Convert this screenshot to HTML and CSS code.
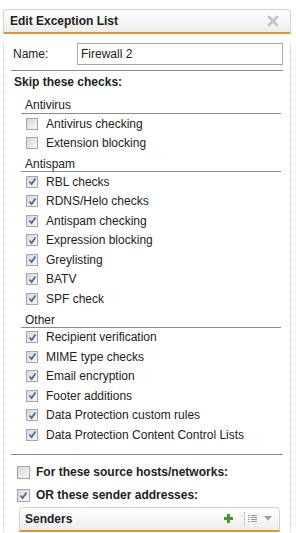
FILE: index.html
```html
<!DOCTYPE html>
<html lang="en">
<head>
  <meta charset="UTF-8" />
  <title>Edit Exception List</title>
  <link rel="stylesheet" href="styles.css">
</head>
<body>
  <div class="dialog">
    <div class="dialog-head">
      <span class="title">Edit Exception List</span>
      <svg class="close" width="12" height="12" viewBox="0 0 12 12">
        <path d="M2 2 L10 10 M10 2 L2 10" stroke="#c4c4c4" stroke-width="2.8" stroke-linecap="round" />
      </svg>
    </div>

    <div class="dialog-body">
      <div class="name-row">
        <label class="name-label">Name:</label>
        <input class="name-input" type="text" value="Firewall 2" />
      </div>

      <div class="skip-title">Skip these checks:</div>

      <div class="group">
        <div class="group-title first">Antivirus</div>
        <div class="check"><span class="box"></span>Antivirus checking</div>
        <div class="check"><span class="box"></span>Extension blocking</div>
      </div>

      <div class="group">
        <div class="group-title">Antispam</div>
        <div class="check"><span class="box on"><svg viewBox="0 0 9 9"><path d="M1.5 4.5 L3.6 7 L7.5 1.5" /></svg></span>RBL checks</div>
        <div class="check"><span class="box on"><svg viewBox="0 0 9 9"><path d="M1.5 4.5 L3.6 7 L7.5 1.5" /></svg></span>RDNS/Helo checks</div>
        <div class="check"><span class="box on"><svg viewBox="0 0 9 9"><path d="M1.5 4.5 L3.6 7 L7.5 1.5" /></svg></span>Antispam checking</div>
        <div class="check"><span class="box on"><svg viewBox="0 0 9 9"><path d="M1.5 4.5 L3.6 7 L7.5 1.5" /></svg></span>Expression blocking</div>
        <div class="check"><span class="box on"><svg viewBox="0 0 9 9"><path d="M1.5 4.5 L3.6 7 L7.5 1.5" /></svg></span>Greylisting</div>
        <div class="check"><span class="box on"><svg viewBox="0 0 9 9"><path d="M1.5 4.5 L3.6 7 L7.5 1.5" /></svg></span>BATV</div>
        <div class="check"><span class="box on"><svg viewBox="0 0 9 9"><path d="M1.5 4.5 L3.6 7 L7.5 1.5" /></svg></span>SPF check</div>
      </div>

      <div class="group">
        <div class="group-title">Other</div>
        <div class="check"><span class="box on"><svg viewBox="0 0 9 9"><path d="M1.5 4.5 L3.6 7 L7.5 1.5" /></svg></span>Recipient verification</div>
        <div class="check"><span class="box on"><svg viewBox="0 0 9 9"><path d="M1.5 4.5 L3.6 7 L7.5 1.5" /></svg></span>MIME type checks</div>
        <div class="check"><span class="box on"><svg viewBox="0 0 9 9"><path d="M1.5 4.5 L3.6 7 L7.5 1.5" /></svg></span>Email encryption</div>
        <div class="check"><span class="box on"><svg viewBox="0 0 9 9"><path d="M1.5 4.5 L3.6 7 L7.5 1.5" /></svg></span>Footer additions</div>
        <div class="check"><span class="box on"><svg viewBox="0 0 9 9"><path d="M1.5 4.5 L3.6 7 L7.5 1.5" /></svg></span>Data Protection custom rules</div>
        <div class="check"><span class="box on"><svg viewBox="0 0 9 9"><path d="M1.5 4.5 L3.6 7 L7.5 1.5" /></svg></span>Data Protection Content Control Lists</div>
      </div>

      <div class="sources">
        <div class="check big"><span class="box"></span>For these source hosts/networks:</div>
        <div class="check big"><span class="box on"><svg viewBox="0 0 9 9"><path d="M1.5 4.5 L3.6 7 L7.5 1.5" /></svg></span>OR these sender addresses:</div>
      </div>

      <div class="grid-head">
        <span class="grid-title">Senders</span>
        <svg class="add" width="11" height="11" viewBox="0 0 11 11">
          <path d="M5.5 1 V10 M1 5.5 H10" stroke="#3d9b2b" stroke-width="3" />
        </svg>
        <span class="sep"></span>
        <svg class="list" width="9" height="8" viewBox="0 0 9 8">
          <path d="M0 0.5 H1.5 M3 0.5 H9 M0 2.5 H1.5 M3 2.5 H9 M0 4.5 H1.5 M3 4.5 H9 M0 6.5 H1.5 M3 6.5 H9" stroke="#9a9a9a" stroke-width="1" />
        </svg>
        <svg class="caret" width="8" height="5" viewBox="0 0 8 5">
          <path d="M0 0 H8 L4 4.5 Z" fill="#9a9a9a" />
        </svg>
      </div>
    </div>
  </div>
</body>
</html>
```

FILE: styles.css
```css
/* Reset */
*, *::before, *::after {
  margin: 0;
  padding: 0;
  box-sizing: border-box;
}

body {
  font-family: 'Liberation Sans', Arial, sans-serif;
  font-size: 12px;
  color: #222;
  background: #fff;
  overflow: hidden;
}

.dialog {
  width: 288px;
  margin: 9px 0 0 3px;
}

.dialog-head {
  height: 25px;
  display: flex;
  align-items: center;
  justify-content: space-between;
  padding: 0 11px 0 6px;
  border: 1px solid #d4d4d4;
  border-bottom: 2px solid #e8942a;
  border-radius: 4px 4px 0 0;
  background: linear-gradient(#ffffff, #ececec);
}

.title {
  font-weight: bold;
  font-size: 12px;
  color: #222;
}

.close {
  display: block;
}

.dialog-body {
  border-left: 1px dotted #c8c8c8;
  border-right: 1px dotted #c8c8c8;
  padding: 0 7px;
}

.name-row {
  display: flex;
  align-items: center;
  margin-top: 9px;
  padding-bottom: 5px;
  border-bottom: 1px solid #8a8a8a;
}

.name-label {
  width: 66px;
  padding-left: 2px;
}

.name-input {
  width: 206px;
  height: 22px;
  border: 1px solid #a8a8a8;
  padding: 0 3px;
  font-family: 'Liberation Sans', Arial, sans-serif;
  font-size: 12px;
  color: #222;
  outline: none;
}

.skip-title {
  font-weight: bold;
  line-height: 20px;
  padding: 1px 0 0 3px;
}

.group {
  margin: 0 2px 0 10px;
}

.group-title {
  line-height: 14px;
  padding: 4px 0 0 4px;
  height: 19px;
  border-bottom: 1px solid #8a8a8a;
}

.group-title.first {
  padding-top: 6px;
  height: 22px;
}

.check {
  display: flex;
  align-items: center;
  height: 19.5px;
  padding-left: 5px;
}

.box {
  width: 12px;
  height: 12px;
  margin-right: 8px;
  border: 1px solid #a6a6a6;
  background: linear-gradient(135deg, #d8d8d8, #f8f8f8);
  display: flex;
  align-items: center;
  justify-content: center;
  flex-shrink: 0;
}

.box svg {
  width: 9px;
  height: 9px;
}

.box svg path {
  fill: none;
  stroke: #4a69a8;
  stroke-width: 1.8;
}

.sources {
  margin-top: 9px;
  border-top: 1px solid #8a8a8a;
  padding-top: 6px;
}

.check.big {
  height: 23px;
  padding-left: 6px;
  font-weight: bold;
}

.check.big .box {
  width: 13px;
  height: 13px;
  margin-right: 6px;
}

.grid-head {
  display: flex;
  align-items: center;
  height: 25px;
  margin: 0 3px 0 8px;
  padding: 0 7px 0 5px;
  border: 1px solid #d4d4d4;
  border-bottom: 2px solid #e8942a;
  border-radius: 4px 4px 0 0;
  background: linear-gradient(#ffffff, #ededed);
}

.grid-title {
  font-weight: bold;
  flex: 1;
}

.add {
  display: block;
  margin-right: 10px;
}

.sep {
  width: 0;
  height: 14px;
  border-left: 1px dotted #b0b0b0;
  margin-right: 3px;
}

.list {
  display: block;
  margin-right: 7px;
}

.caret {
  display: block;
}
```
